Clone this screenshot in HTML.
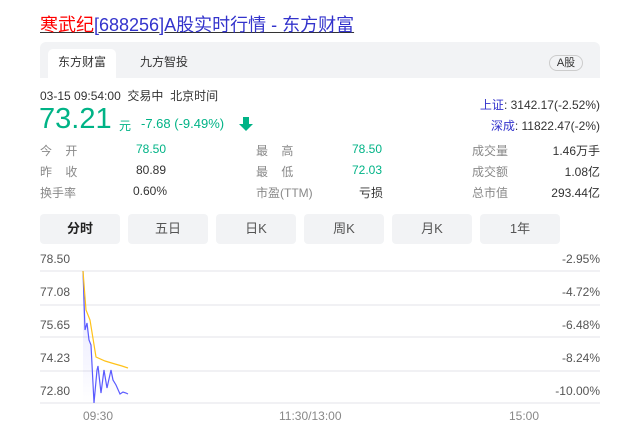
<!DOCTYPE html><html><head><meta charset="utf-8"><style>
*{margin:0;padding:0;box-sizing:border-box}
body{width:637px;height:433px;background:#fff;font-family:"Liberation Sans","Noto Sans CJK SC",sans-serif;position:relative;overflow:hidden;color:#333}
.a{position:absolute;white-space:nowrap}
.f12{font-size:12px}.g{color:#888}.gr{color:#00b386}
.btn{position:absolute;top:214px;width:80px;height:30px;background:#f2f3f5;border-radius:4px;font-size:13px;color:#555;text-align:center;line-height:30px}
.ln{position:absolute;left:40px;width:560px;height:2px;background:#f1f1f4}
.yl{position:absolute;left:40px;font-size:12px;color:#555}
.yr{position:absolute;right:37px;font-size:12px;color:#555}
</style></head><body>
<div class="a" style="left:40px;top:11px;font-size:18px;text-decoration:underline"><span style="color:#f00">寒武纪</span><span style="color:#3333cc">[688256]A股实时行情 - 东方财富</span></div>
<div class="a" style="left:40px;top:42px;width:560px;height:36px;background:#f2f3f5;border-radius:6px 6px 0 0"></div>
<div class="a" style="left:48px;top:49px;width:68px;height:29px;background:#fff;border-radius:5px 5px 0 0;font-size:12px;text-align:center;line-height:27px">东方财富</div>
<div class="a" style="left:140px;top:49px;font-size:12px;line-height:27px">九方智投</div>
<div class="a" style="left:549px;top:55px;width:34px;height:16px;border:1px solid #ccc;border-radius:8px;font-size:11px;text-align:center;line-height:14px">A股</div>
<div class="a f12" style="left:40px;top:87px">03-15 09:54:00&nbsp; 交易中&nbsp; 北京时间</div>
<div class="a gr" style="left:39px;top:102px;font-size:29px;line-height:34px">73.21</div>
<div class="a gr" style="left:119px;top:117px;font-size:12px">元</div>
<div class="a gr" style="left:141px;top:116px;font-size:13px">-7.68 (-9.49%)</div>
<svg class="a" style="left:238px;top:116px" width="16" height="16"><path d="M5 1h6v7h4L8 15 1 8h4z" fill="#00b386"/></svg>
<div class="a f12" style="right:37px;top:96px"><span style="color:#3333cc">上证</span>: 3142.17(-2.52%)</div>
<div class="a f12" style="right:37px;top:117px"><span style="color:#3333cc">深成</span>: 11822.47(-2%)</div>
<div class="a f12 g" style="left:40px;top:142px">今&nbsp;&nbsp;&nbsp;&nbsp;开</div><div class="a f12 gr" style="left:136px;top:142px">78.50</div>
<div class="a f12 g" style="left:40px;top:163px">昨&nbsp;&nbsp;&nbsp;&nbsp;收</div><div class="a f12" style="left:136px;top:163px">80.89</div>
<div class="a f12 g" style="left:40px;top:184px">换手率</div><div class="a f12" style="left:133px;top:184px">0.60%</div>
<div class="a f12 g" style="left:256px;top:142px">最&nbsp;&nbsp;&nbsp;&nbsp;高</div><div class="a f12 gr" style="left:352px;top:142px">78.50</div>
<div class="a f12 g" style="left:256px;top:163px">最&nbsp;&nbsp;&nbsp;&nbsp;低</div><div class="a f12 gr" style="left:352px;top:163px">72.03</div>
<div class="a f12 g" style="left:256px;top:184px">市盈(TTM)</div><div class="a f12" style="left:359px;top:184px">亏损</div>
<div class="a f12 g" style="left:472px;top:142px">成交量</div><div class="a f12" style="right:37px;top:142px">1.46万手</div>
<div class="a f12 g" style="left:472px;top:163px">成交额</div><div class="a f12" style="right:37px;top:163px">1.08亿</div>
<div class="a f12 g" style="left:472px;top:184px">总市值</div><div class="a f12" style="right:37px;top:184px">293.44亿</div>
<div class="btn" style="left:40px;color:#222;font-weight:bold">分时</div>
<div class="btn" style="left:128px">五日</div>
<div class="btn" style="left:216px">日K</div>
<div class="btn" style="left:304px">周K</div>
<div class="btn" style="left:392px">月K</div>
<div class="btn" style="left:480px">1年</div>
<div class="ln" style="top:270px"></div><div class="ln" style="top:304px"></div><div class="ln" style="top:336px"></div><div class="ln" style="top:370px"></div><div class="ln" style="top:402px"></div>
<div class="yl" style="top:252px">78.50</div><div class="yl" style="top:285px">77.08</div><div class="yl" style="top:318px">75.65</div><div class="yl" style="top:351px">74.23</div><div class="yl" style="top:384px">72.80</div>
<div class="yr" style="top:252px">-2.95%</div><div class="yr" style="top:285px">-4.72%</div><div class="yr" style="top:318px">-6.48%</div><div class="yr" style="top:351px">-8.24%</div><div class="yr" style="top:384px">-10.00%</div>
<svg class="a" style="left:0;top:0" width="637" height="433">
<defs><linearGradient id="gg" x1="0" y1="0" x2="0" y2="1"><stop offset="0" stop-color="#5b5bff" stop-opacity=".18"/><stop offset="1" stop-color="#5b5bff" stop-opacity="0"/></linearGradient></defs>
<path d="M83 271L85 330 87 323 89 340 91 345 94 403 97 370 98 366 101 393 104 370 107 388 111 370 113 380 116 385 120 394 123 392 126 393 128 394L128 403 83 403Z" fill="url(#gg)"/>
<polyline points="83,271 85,330 87,323 89,340 91,345 94,403 97,370 98,366 101,393 104,370 107,388 111,370 113,380 116,385 120,394 123,392 126,393 128,394" fill="none" stroke="#5a5aff" stroke-width="1.2"/>
<polyline points="83,271 86,310 90,320 96,357 105,361 115,364 122,366 128,368" fill="none" stroke="#ffc21a" stroke-width="1.2"/>
</svg>
<div class="a f12 g" style="left:83px;top:409px">09:30</div>
<div class="a f12 g" style="left:279px;top:409px">11:30/13:00</div>
<div class="a f12 g" style="left:509px;top:409px">15:00</div>
</body></html>
